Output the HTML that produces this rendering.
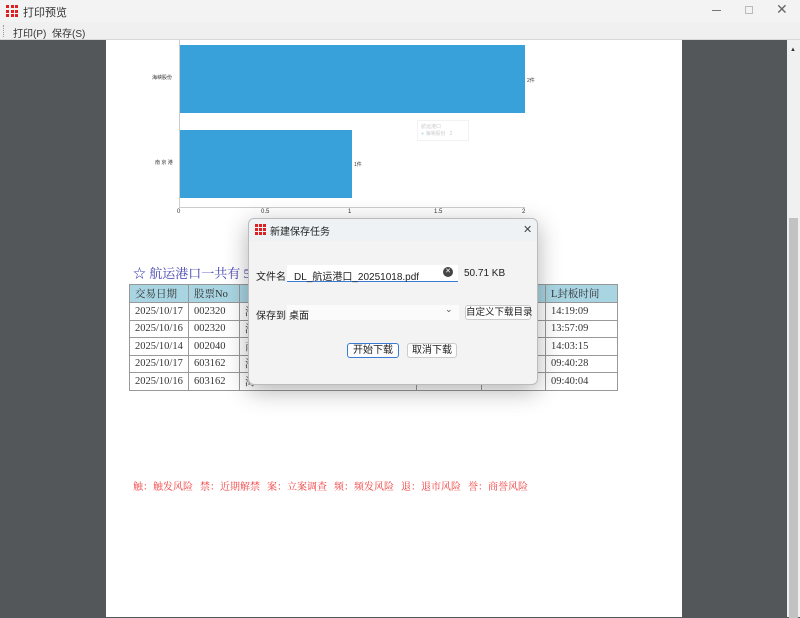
<!DOCTYPE html>
<html><head><meta charset="utf-8"><style>
*{margin:0;padding:0;box-sizing:border-box}
body{width:800px;height:617px;overflow:hidden;background:#53575a;font-family:"Liberation Sans","Noto Sans CJK SC",sans-serif;position:relative;white-space:nowrap}
.abs{position:absolute}
.title{left:0;top:0;width:800px;height:22px;background:#f3f3f3;font-size:11px;color:#333}
.menu{left:0;top:22px;width:800px;height:18px;background:#f0f0f0;border-bottom:1px solid #d8d8d8;font-size:10px;color:#333}
.page{left:106px;top:40px;width:576px;height:577px;background:#fff}
.sb{left:787px;top:40px;width:13px;height:577px;background:#f0f0f0}
.bar{background:#38a1d9}
table{border-collapse:collapse;font-family:"Liberation Serif","Noto Serif CJK SC",serif;font-size:10.5px;color:#333}
td{border:1px solid #999;height:17.5px;padding-left:5px}
th{border:1px solid #999;background:#a9d5e3;font-weight:normal;text-align:left;padding-left:5px;height:18px}
.dlg{left:248px;top:218px;width:290px;height:167px;background:#f3f3f3;border:1px solid #bbb;border-radius:6px;box-shadow:0 6px 24px rgba(0,0,0,.3);font-size:10px;color:#222;overflow:hidden}
.btn{background:#fdfdfd;border:1px solid #ccc;border-radius:3px;text-align:center;font-size:10px;line-height:13px}
</style></head><body>
<div class="abs title">
 <div class="abs" style="left:6px;top:5px;width:12px;height:12px;display:grid;grid-template-columns:repeat(3,3px);gap:1.5px">
  <i style="background:#e02020"></i><i style="background:#e02020"></i><i style="background:#e02020"></i><i style="background:#e02020"></i><i style="background:#e02020"></i><i style="background:#e02020"></i><i style="background:#e02020"></i><i style="background:#e02020"></i><i style="background:#e02020"></i></div>
 <div class="abs" style="left:23px;top:4px">打印预览</div>
 <div class="abs" style="left:712px;top:10px;width:9px;height:1px;background:#777"></div>
 <div class="abs" style="left:745px;top:6px;width:8px;height:8px;border:1px solid #bbb"></div>
 <div class="abs" style="left:776px;top:1px;font-size:14px;color:#666">✕</div>
</div>
<div class="abs menu"><div class="abs" style="left:3px;top:3px;height:12px;border-left:1px dotted #999"></div>
 <div class="abs" style="left:13px;top:3px">打印(P)</div><div class="abs" style="left:52px;top:3px">保存(S)</div></div>
<div class="abs page"></div>
<div class="abs sb"><div class="abs" style="left:3px;top:7px;font-size:6px;color:#333">▲</div><div class="abs" style="left:2px;top:178px;width:9px;height:400px;background:#c2c2c2"></div></div>

<div class="abs" style="left:179px;top:40px;width:1px;height:168px;background:#ccc"></div>
<div class="abs" style="left:179px;top:207px;width:346px;height:1px;background:#ccc"></div>
<div class="abs bar" style="left:180px;top:45px;width:345px;height:68px"></div>
<div class="abs bar" style="left:180px;top:130px;width:172px;height:68px"></div>
<div class="abs" style="left:152px;top:74px;font-size:5px;color:#333">海峡股份</div>
<div class="abs" style="left:155px;top:159px;font-size:5px;color:#333">南 京 港</div>
<div class="abs" style="left:527px;top:77px;font-size:5px;color:#333">2件</div>
<div class="abs" style="left:354px;top:161px;font-size:5px;color:#333">1件</div>
<div class="abs" style="font-size:6px;color:#333;top:209px;left:177px">0</div>
<div class="abs" style="font-size:6px;color:#333;top:209px;left:261px">0.5</div>
<div class="abs" style="font-size:6px;color:#333;top:209px;left:348px">1</div>
<div class="abs" style="font-size:6px;color:#333;top:209px;left:434px">1.5</div>
<div class="abs" style="font-size:6px;color:#333;top:209px;left:522px">2</div>
<div class="abs" style="left:417px;top:120px;width:52px;height:21px;border:1px solid #f2f2f2;font-size:5px;color:#ccc;padding:2px 3px">航运港口<br><span style="color:#bde">●</span> 海峡股份 &nbsp; 2</div>

<div class="abs" style="left:133px;top:263px;font-family:'Liberation Serif','Noto Serif CJK SC',serif;font-size:13px;color:#4040b0">☆ 航运港口一共有 5件</div>
<table class="abs" style="left:129px;top:284px;width:489px">
<tr><th style="width:59px">交易日期</th><th style="width:51px">股票No</th><th></th><th></th><th></th><th style="width:72px">L封板时间</th></tr>
<tr><td>2025/10/17</td><td>002320</td><td>海</td><td></td><td></td><td>14:19:09</td></tr>
<tr><td>2025/10/16</td><td>002320</td><td>海</td><td></td><td></td><td>13:57:09</td></tr>
<tr><td>2025/10/14</td><td>002040</td><td>南</td><td></td><td></td><td>14:03:15</td></tr>
<tr><td>2025/10/17</td><td>603162</td><td>海</td><td></td><td></td><td>09:40:28</td></tr>
<tr><td>2025/10/16</td><td>603162</td><td>海</td><td></td><td></td><td>09:40:04</td></tr>
</table>
<div class="abs" style="left:133px;top:478px;font-family:'Liberation Serif','Noto Serif CJK SC',serif;font-size:10px;color:#f03c3c;word-spacing:1px">触：触发风险&nbsp; 禁：近期解禁&nbsp; 案：立案调查&nbsp; 频：频发风险&nbsp; 退：退市风险&nbsp; 誉：商誉风险</div>

<div class="abs dlg">
 <div class="abs" style="left:0;top:0;width:290px;height:22px;background:#eef2f5"></div>
 <div class="abs" style="left:6px;top:5px;width:11px;height:11px;display:grid;grid-template-columns:repeat(3,3px);gap:1px">
  <i style="background:#e02020"></i><i style="background:#e02020"></i><i style="background:#e02020"></i><i style="background:#e02020"></i><i style="background:#e02020"></i><i style="background:#e02020"></i><i style="background:#e02020"></i><i style="background:#e02020"></i><i style="background:#e02020"></i></div>
 <div class="abs" style="left:21px;top:4px">新建保存任务</div>
 <div class="abs" style="left:274px;top:4px;font-size:11px;color:#444">✕</div>
 <div class="abs" style="left:7px;top:49px">文件名</div>
 <div class="abs" style="left:38px;top:46px;width:171px;height:17px;background:#fff;border-bottom:1px solid #3a7bd5"></div>
 <div class="abs" style="left:45px;top:49px">DL_航运港口_20251018.pdf</div>
 <div class="abs" style="left:194px;top:48px;width:10px;height:10px;border-radius:50%;background:#444;color:#fff;font-size:7px;line-height:10px;text-align:center">✕</div>
 <div class="abs" style="left:215px;top:49px">50.71 KB</div>
 <div class="abs" style="left:7px;top:88px">保存到</div>
 <div class="abs" style="left:38px;top:86px;width:172px;height:15px;background:#fbfbfb"></div>
 <div class="abs" style="left:40px;top:88px">桌面</div>
 <div class="abs" style="left:196px;top:85px;font-size:9px;color:#555">⌄</div>
 <div class="abs btn" style="left:216px;top:86px;width:66px;height:15px;font-size:9.5px">自定义下载目录</div>
 <div class="abs btn" style="left:98px;top:124px;width:52px;height:15px;border-color:#3a7bd5">开始下载</div>
 <div class="abs btn" style="left:158px;top:124px;width:50px;height:15px">取消下载</div>
</div>
</body></html>
